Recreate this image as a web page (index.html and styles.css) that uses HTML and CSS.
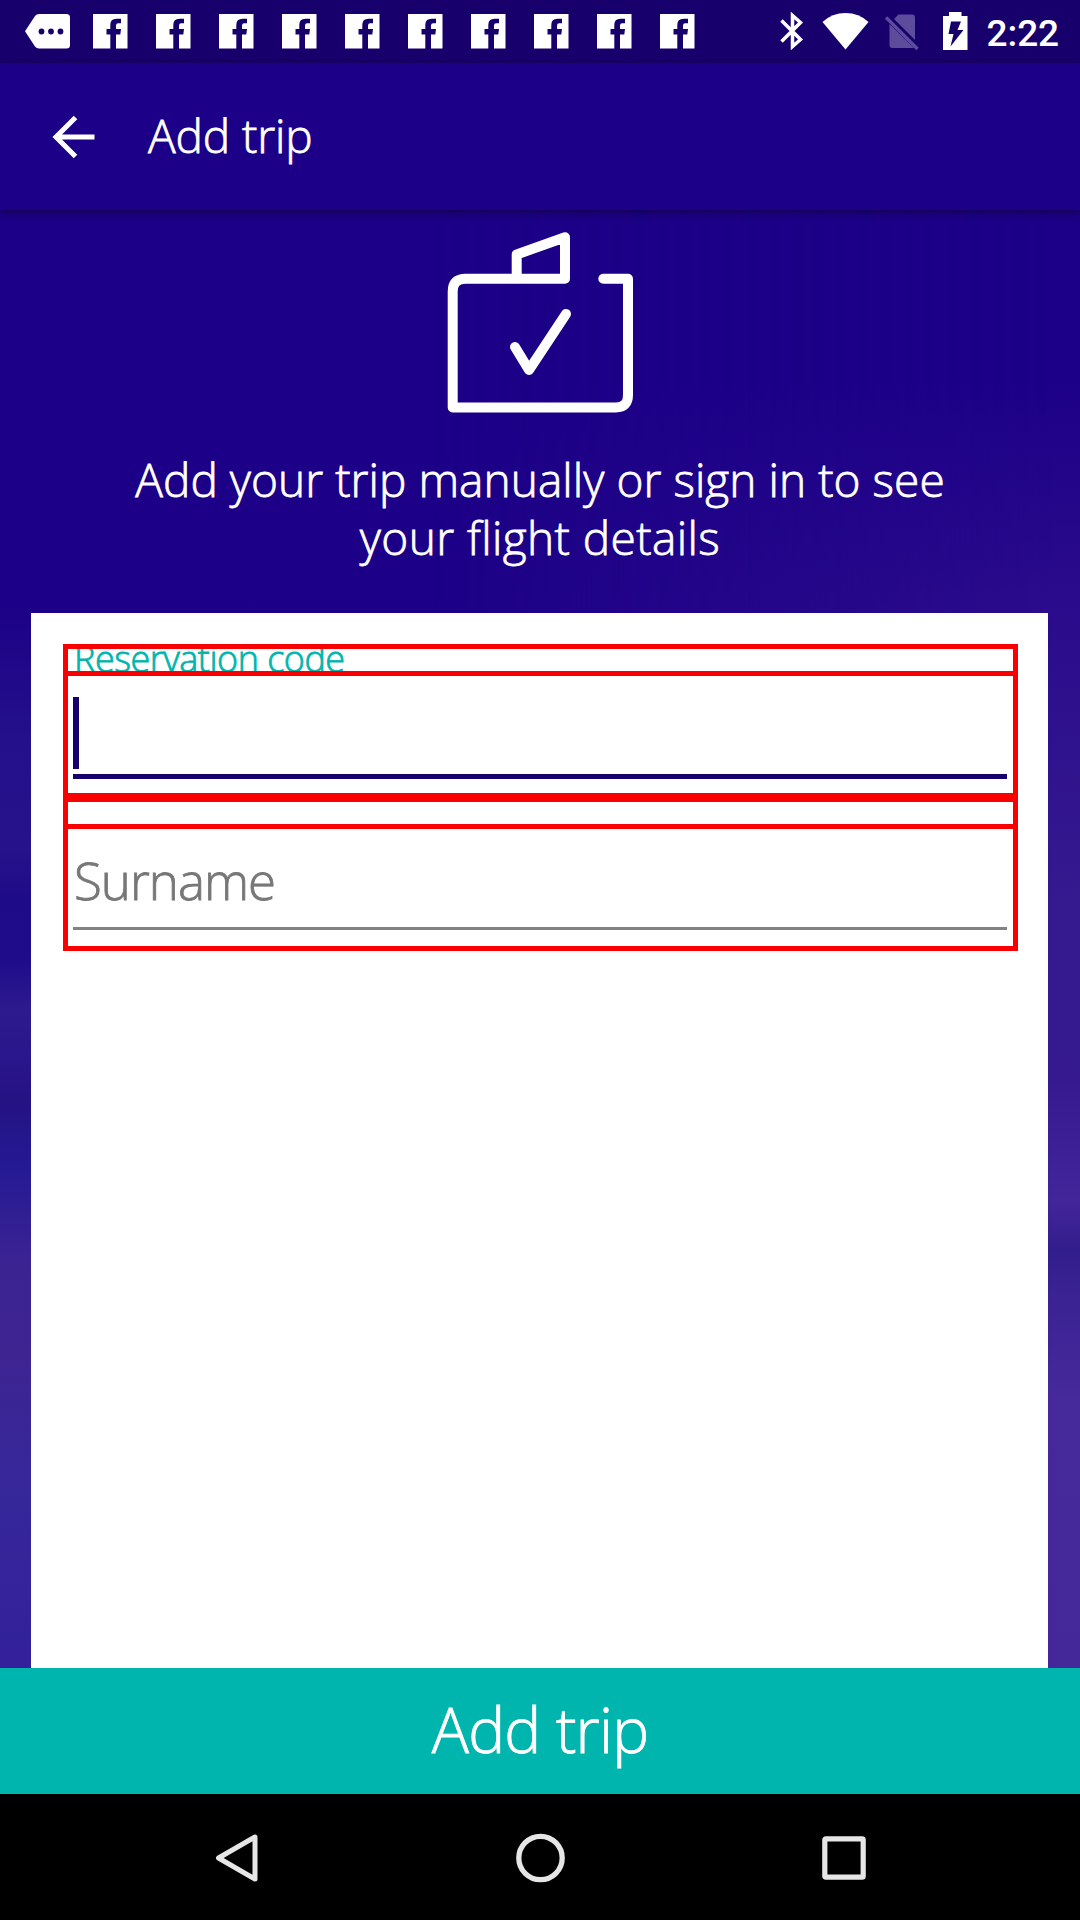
FILE: index.html
```html
<!DOCTYPE html>
<html lang="en">
<head>
<meta charset="utf-8">
<title>Add trip</title>
<link rel="stylesheet" href="styles.css">
</head>
<body>
<svg class="defs" width="0" height="0" aria-hidden="true">
  <symbol id="fb" viewBox="0 0 35 35"><path d="M0 0H34.500V34.500H23V20.500H27.300L28 15H23V11.500Q23 9.300 25.200 9.300H28V4.700H23.500Q17.300 4.700 17.300 11V15H13.500V20.500H17.300V34.500H0Z" fill="#fff"/></symbol>
</svg>
<div class="screen">
  <header class="status">
    <div class="notifications">
      <svg class="more" width="46" height="35" viewBox="0 0 46 35"><path d="M14 0H41.500Q45 0 45 3.500V31Q45 34.500 41.500 34.500H14Q11.500 34.500 10 32.500L0 17.250L10 2Q11.500 0 14 0Z" fill="#fff"/><g fill="#18006a"><circle cx="16.500" cy="17.500" r="2.900"/><circle cx="26" cy="17.500" r="2.900"/><circle cx="35.500" cy="17.500" r="2.900"/></g></svg>
      <svg class="fb"><use href="#fb"/></svg>
      <svg class="fb"><use href="#fb"/></svg>
      <svg class="fb"><use href="#fb"/></svg>
      <svg class="fb"><use href="#fb"/></svg>
      <svg class="fb"><use href="#fb"/></svg>
      <svg class="fb"><use href="#fb"/></svg>
      <svg class="fb"><use href="#fb"/></svg>
      <svg class="fb"><use href="#fb"/></svg>
      <svg class="fb"><use href="#fb"/></svg>
      <svg class="fb"><use href="#fb"/></svg>
    </div>
    <div class="system">
      <svg width="24" height="38" viewBox="0 0 24 38"><path d="M1.500 8.500L20.500 27.500L12.500 34.500V3.500L20.500 10.500L1.500 29.500" fill="none" stroke="#fff" stroke-width="3.500"/></svg>
      <svg class="wifi" width="48" height="38" viewBox="0 0 48 38"><path d="M0.500 9Q10 0 23.500 0T46.500 9L23.500 36.500Z" fill="#fff"/></svg>
      <svg class="sim" width="34" height="38" viewBox="0 0 34 38"><path d="M9 6L13.500 1.500H27Q30 1.500 30 4.500V27ZM4.500 11L29 35H7.500Q4.500 35 4.500 32Z" fill="#5d4c9b"/><path d="M1 4.500L32.500 36" stroke="#5d4c9b" stroke-width="3.300"/></svg>
      <svg class="battery" width="25" height="38" viewBox="0 0 25 38"><path d="M0 4H6V0H18.500V4H24.500V38H0Z" fill="#fff"/><path d="M8 9.500H18L14.500 18H20.500L7.500 34.500L10.500 22H5.500Z" fill="#18006a"/></svg>
      <span class="clock">2:22</span>
    </div>
  </header>

  <nav class="toolbar">
    <svg width="44" height="44" viewBox="0 0 44 44"><path d="M42.500 22H4M23.500 2.500L4 22L23.500 41.500" fill="none" stroke="#fff" stroke-width="5"/></svg>
    <h1 class="title">Add trip</h1>
  </nav>

  <main class="content">
    <svg class="trip-icon" width="240" height="202" viewBox="0 14 240 202" fill="none" stroke="#fff" stroke-width="10" stroke-linecap="round" stroke-linejoin="round"><path d="M183.300 78.700H208V195Q208 207.400 196 207.400H32.700V91.500Q32.700 78.700 45.500 78.700H145V37.200L96.700 54.500V78"/><path d="M95 147L109 170L146 114"/></svg>
    <p class="intro"><span class="line-one">Add your trip manually or sign in to see</span><br><span class="line-two">your flight details</span></p>
    <section class="card">
      <div class="field">
        <div class="label"><span class="label-text">Reservation code</span></div>
        <div class="input focused"><span class="caret"></span></div>
      </div>
      <div class="field">
        <div class="label"></div>
        <div class="input"><span class="placeholder">Surname</span></div>
      </div>
    </section>
  </main>

  <div class="submit"><span class="submit-text">Add trip</span></div>

  <footer class="navbar">
    <svg width="50" height="50" viewBox="0 0 50 50"><path d="M44 4V46L7.500 25Z" fill="none" stroke="#e6e6e6" stroke-width="5" stroke-linejoin="round"/></svg>
    <svg width="50" height="50" viewBox="0 0 50 50"><circle cx="25.500" cy="25" r="21.700" fill="none" stroke="#e6e6e6" stroke-width="5.300"/></svg>
    <svg width="50" height="50" viewBox="0 0 50 50"><rect x="5.800" y="5.800" width="38.400" height="38.400" rx="1" fill="none" stroke="#e6e6e6" stroke-width="5.200"/></svg>
  </footer>
</div>
</body>
</html>
```
FILE: styles.css
```css
* { box-sizing: border-box; }
body { margin: 0; background: #1c0087; font-family: "Open Sans", "Noto Sans", sans-serif; font-weight: 300; }
svg { display: block; flex: none; }
.defs { position: absolute; }
.screen {
  position: relative;
  isolation: isolate;
  display: flex;
  flex-direction: column;
  width: 1080px;
  height: 1920px;
  overflow: hidden;
  background: linear-gradient(#1c0087 600px, #24108b 740px, #26128a 850px, #1e0b88 900px, #1f0c8b 960px, #2c1a8e 1010px, #2a168c 1060px, #251283 1100px, #241993 1165px, #3b2393 1260px, #3e2491 1350px, #36279a 1480px, #33209a 1668px);
}
.screen::before {
  content: "";
  position: absolute;
  inset: 0;
  z-index: -1;
  background: linear-gradient(#1c0087 380px, #2a0b8b 600px, #34198f 900px, #36198f 1080px, #43259a 1200px, #321d8c 1250px, #3a2293 1290px, #46299b 1400px, #442799 1668px);
  mask-image: linear-gradient(90deg, transparent 40%, #000 98%);
}
.status {
  flex: none;
  display: flex;
  justify-content: space-between;
  height: 63px;
  padding: 12px 21px 0 25px;
  background: #18006c;
}
.notifications { display: flex; gap: 28px; padding-top: 2px; }
.more { margin-right: -6px; }
.fb { width: 35px; height: 35px; }
.system { display: flex; align-items: flex-start; }
.wifi { margin-left: 18px; margin-top: 1px; }
.sim { margin-left: 15px; margin-top: 1px; }
.battery { margin-left: 24px; }
.clock { margin-left: 19px; font: 500 37px/43px Roboto, sans-serif; color: #fff; letter-spacing: -0.1px; white-space: nowrap; }
.toolbar {
  flex: none;
  display: flex;
  align-items: center;
  gap: 52px;
  height: 147px;
  padding-left: 52px;
  background: #1c0087;
  box-shadow: 0 2px 8px #12004a;
}
.title, .intro, .label-text, .placeholder, .submit-text { -webkit-text-stroke: 0.8px currentColor; }
.title { margin: 0; padding-bottom: 3px; font-size: 46px; font-weight: inherit; line-height: 60px; color: #fff; letter-spacing: -0.1px; }
.content { flex: 1; display: flex; flex-direction: column; min-height: 0; padding-top: 4px; }
.trip-icon { align-self: center; }
.intro { flex: none; height: 163px; margin: 34px 0 0; text-align: center; font-size: 46px; line-height: 58px; color: #fff; white-space: nowrap; }
.line-one { letter-spacing: 0.05px; }
.line-two { letter-spacing: 0.4px; }
.card { flex: 1; margin: 0 32px 0 31px; padding: 31px 30px 0 32px; background: #fff; }
.field { height: 154px; border: 5px solid #fb0000; }
.field + .field { margin-top: -1px; }
.label { height: 22px; padding-left: 6px; overflow: hidden; }
.label-text { display: block; margin-top: -15px; font-size: 36px; line-height: 50px; color: #00b5ad; letter-spacing: -0.5px; white-space: nowrap; }
.input {
  display: flex;
  flex-direction: column;
  justify-content: flex-end;
  height: 127px;
  margin: 0 -5px;
  padding: 0 6px 16px 5px;
  border: 5px solid #fb0000;
}
.input::after { content: ""; height: 3px; background: #828282; }
.input.focused { padding-bottom: 14px; }
.input.focused::after { height: 5px; background: #18006c; }
.caret { width: 6px; height: 72px; margin-bottom: 5px; background: #18006c; }
.placeholder { margin: 0 0 12px 1px; font-size: 51px; line-height: 70px; letter-spacing: -1px; color: #777; }
.submit { flex: none; display: flex; justify-content: center; align-items: center; height: 126px; padding-bottom: 4px; background: #00b5ad; color: #fff; font-size: 62px; line-height: 80px; letter-spacing: -0.8px; }
.navbar { flex: none; display: flex; justify-content: center; align-items: center; gap: 254px; height: 126px; padding-top: 1px; background: #000; }
```
